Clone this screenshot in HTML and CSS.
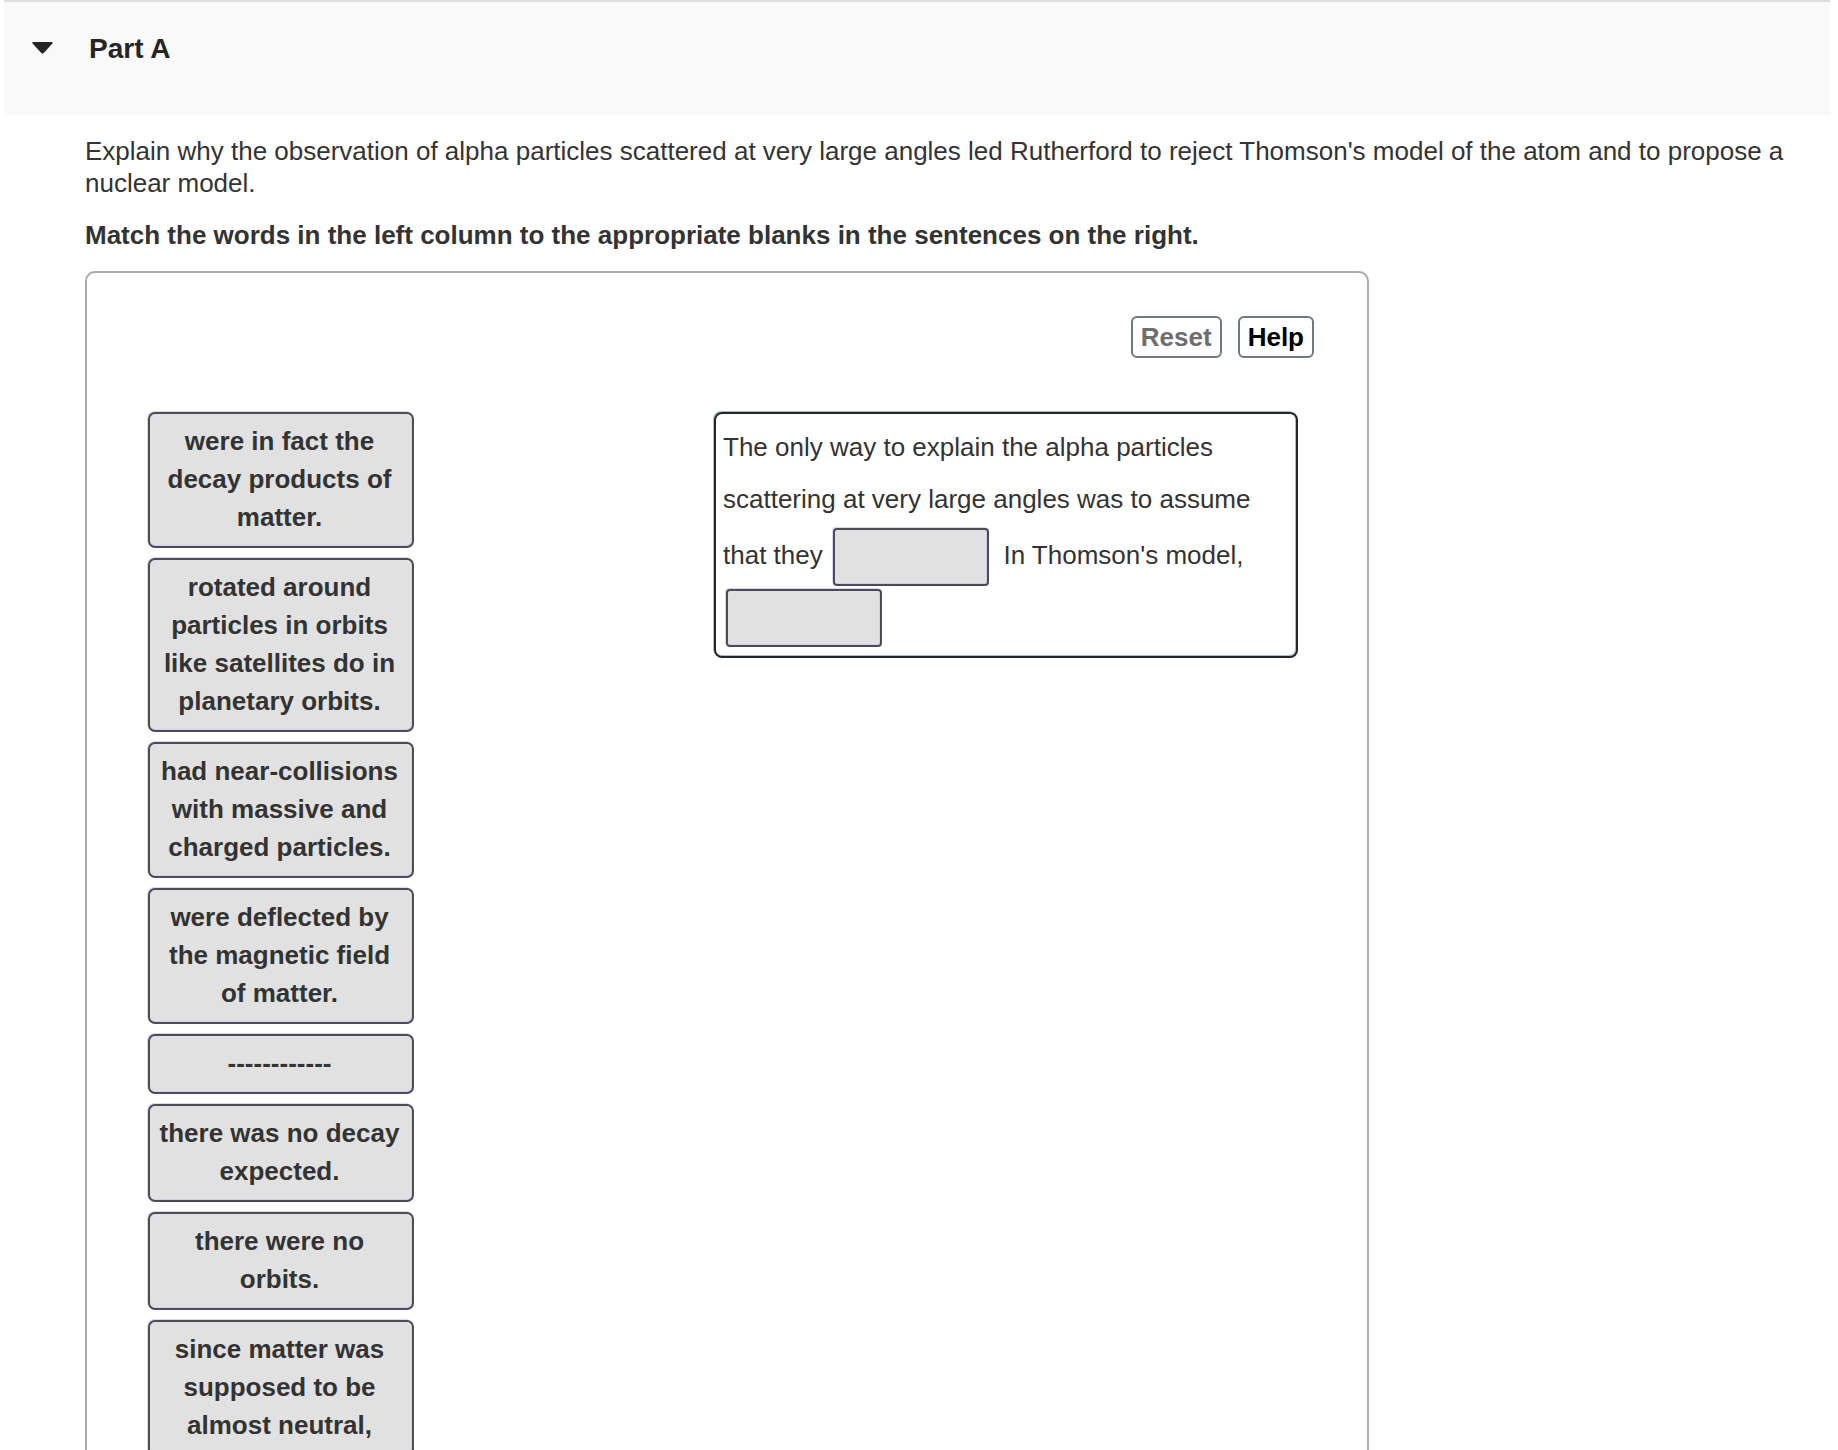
FILE: index.html
```html
<!DOCTYPE html>
<html lang="en">
<head>
<meta charset="utf-8">
<title>Part A</title>
<link rel="stylesheet" href="styles.css">
</head>
<body>
<main class="page">
  <header class="part-header">
    <button class="toggle" type="button" aria-label="Collapse Part A" aria-expanded="true">
      <svg width="21" height="12" viewBox="0 0 21 12" aria-hidden="true"><path d="M1.2 0H19.8Q21 .3 20.4 1.6L12 10.8Q10.5 12.2 9 10.8L.6 1.6Q0 .3 1.2 0Z" fill="#252525"/></svg>
    </button>
    <h1 class="part-title">Part A</h1>
  </header>
  <section class="question">
    <p class="prompt">Explain why the observation of alpha particles scattered at very large angles led Rutherford to reject Thomson's model of the atom and to propose a nuclear model.</p>
    <p class="instruction">Match the words in the left column to the appropriate blanks in the sentences on the right.</p>
    <div class="panel">
      <div class="toolbar">
        <button class="tool" type="button" disabled>Reset</button>
        <button class="tool" type="button">Help</button>
      </div>
      <div class="workspace">
        <div class="choices">
          <button class="choice" type="button">were in fact the decay products of matter.</button>
          <button class="choice" type="button">rotated around particles in orbits like satellites do in planetary orbits.</button>
          <button class="choice" type="button">had near-collisions with massive and charged particles.</button>
          <button class="choice" type="button">were deflected by the magnetic field of matter.</button>
          <button class="choice" type="button">------------</button>
          <button class="choice" type="button">there was no decay expected.</button>
          <button class="choice" type="button">there were no orbits.</button>
          <button class="choice" type="button">since matter was supposed to be almost neutral,</button>
        </div>
        <p class="sentence">The only way to explain the alpha particles scattering at very large angles was to assume that they <button class="blank" type="button" aria-label="Blank 1"></button>&nbsp; In Thomson's model, <button class="blank" type="button" aria-label="Blank 2"></button></p>
      </div>
    </div>
  </section>
</main>
</body>
</html>
```
FILE: styles.css
```css
* {
  box-sizing: border-box;
}

body {
  margin: 0;
  background: #fff;
  color: #333;
  font-family: "Liberation Sans", Arial, sans-serif;
  font-size: 26px;
  line-height: 32px;
}

button {
  font: inherit;
  color: inherit;
  padding: 0;
}

.page {
  height: 100vh;
  overflow: hidden;
}

.part-header {
  display: flex;
  align-items: flex-start;
  gap: 36px;
  margin: 0 8px 0 4px;
  padding: 31px 28px 50px;
  border-top: 2px solid #ddd;
  background: #f9f9f9;
  color: #252525;
}

.toggle {
  display: flex;
  align-items: center;
  height: 30px;
  border: 0;
  background: none;
}

.part-title {
  margin: 0;
  font-size: 28px;
  line-height: 32px;
}

.question {
  padding: 20px 48px 0 85px;
}

.prompt,
.instruction {
  margin: 0 0 20px;
}

.instruction {
  font-weight: bold;
}

.panel {
  max-width: 1284px;
  padding: 43px 53px;
  border: 2px solid #aaa;
  border-radius: 10px;
}

.toolbar {
  display: flex;
  justify-content: flex-end;
  gap: 16px;
  margin-bottom: 54px;
}

.tool {
  padding: 3px 8px;
  border: 2px solid #6c7a80;
  border-radius: 6px;
  background: #fff;
  color: #000;
  font-weight: bold;
}

.tool:disabled {
  color: #6e6e6e;
}

.workspace {
  display: flex;
  justify-content: space-between;
  align-items: flex-start;
  padding: 0 16px 0 8px;
}

.choices {
  display: flex;
  flex-direction: column;
  gap: 10px;
  width: 266px;
}

.choice,
.blank {
  border: 2px solid #4c4c56;
  border-radius: 7px;
  background: #e1e1e1;
  box-shadow: -1px -1px 0 #d8d8f2, inset -1px -1px 0 #d0d0ee;
}

.choice {
  padding: 8px 11px 10px 8px;
  font-weight: bold;
  line-height: 38px;
}

.sentence {
  width: 584px;
  margin: 0;
  padding: 7px 8px 9px 7px;
  border: 2px solid #20262b;
  border-radius: 8px;
  box-shadow: -1px -1px 0 #a9c0c6, inset -1px -1px 0 #a9c0c6;
  line-height: 52px;
}

.blank {
  width: 156px;
  height: 58px;
  margin: 3px 0 0 3px;
  border-radius: 4px;
  vertical-align: -20px;
}
```
